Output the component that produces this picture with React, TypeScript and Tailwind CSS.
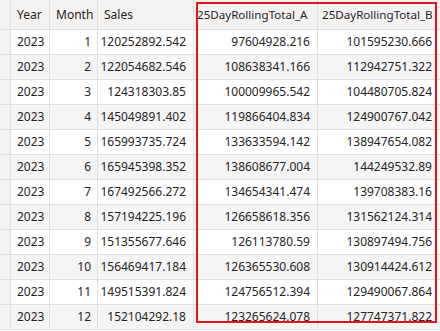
import React from "react";

const rows: [string, string, string, string, string][] = [
  ["2023", "1", "120252892.542", "97604928.216", "101595230.666"],
  ["2023", "2", "122054682.546", "108638341.166", "112942751.322"],
  ["2023", "3", "124318303.85", "100009965.542", "104480705.824"],
  ["2023", "4", "145049891.402", "119866404.834", "124900767.042"],
  ["2023", "5", "165993735.724", "133633594.142", "138947654.082"],
  ["2023", "6", "165945398.352", "138608677.004", "144249532.89"],
  ["2023", "7", "167492566.272", "134654341.474", "139708383.16"],
  ["2023", "8", "157194225.196", "126658618.356", "131562124.314"],
  ["2023", "9", "151355677.646", "126113780.59", "130897494.756"],
  ["2023", "10", "156469417.184", "126365530.608", "130914424.612"],
  ["2023", "11", "149515391.824", "124756512.394", "129490067.864"],
  ["2023", "12", "152104292.18", "123265624.078", "127747371.822"],
];

const cols = "grid grid-cols-[11px_39px_48px_96px_124px_124px]";

export default function App() {
  return (
    <div
      className="relative w-[440px] h-[331px] overflow-hidden bg-white text-[12px] text-[#252423]"
      style={{ fontFamily: '"Noto Sans", "Open Sans", sans-serif' }}
    >
      <div className={`${cols} w-[442px]`}>
        <div className="h-[30px] bg-[#f3f2f1] border-r border-b border-[#e1dfdd]" />
        <div className="h-[30px] bg-[#f3f2f1] border-r border-b border-[#e1dfdd] flex items-center pl-[6px]">Year</div>
        <div className="h-[30px] bg-[#f3f2f1] border-r border-b border-[#e1dfdd] flex items-center pl-[6px]">Month</div>
        <div className="h-[30px] bg-[#f3f2f1] border-r border-b border-[#e1dfdd] flex items-center pl-[6px]">Sales</div>
        <div className="h-[30px] bg-[#f3f2f1] border-r border-b border-[#e1dfdd] flex items-center pl-[3px] whitespace-nowrap text-[11.6px]">25DayRollingTotal_A</div>
        <div className="h-[30px] bg-[#f3f2f1] border-r border-b border-[#e1dfdd] flex items-center pl-[4px] whitespace-nowrap text-[11.6px]">25DayRollingTotal_B</div>
        {rows.map((r, i) => {
          const bg = i % 2 === 1 ? "bg-[#f5f5f5]" : "bg-white";
          return (
            <React.Fragment key={i}>
              <div className="h-[25px] bg-[#f3f2f1] border-r border-b border-[#e1dfdd]" />
              <div className={`h-[25px] ${bg} border-r border-b border-[#e1dfdd] flex items-center pl-[6px]`}>{r[0]}</div>
              <div className={`h-[25px] ${bg} border-r border-b border-[#e1dfdd] flex items-center justify-end pr-[6px]`}>{r[1]}</div>
              <div className={`h-[25px] ${bg} border-r border-b border-[#e1dfdd] flex items-center justify-end pr-[7px]`}>{r[2]}</div>
              <div className={`h-[25px] ${bg} border-r border-b border-[#e1dfdd] flex items-center justify-end pr-[7px]`}>{r[3]}</div>
              <div className={`h-[25px] ${bg} border-r border-b border-[#e1dfdd] flex items-center justify-end pr-[9px]`}>{r[4]}</div>
            </React.Fragment>
          );
        })}
      </div>
      <div className="absolute left-[196px] top-[2px] w-[241px] h-[321px] border-2 border-[#e3141b] pointer-events-none" />
    </div>
  );
}
